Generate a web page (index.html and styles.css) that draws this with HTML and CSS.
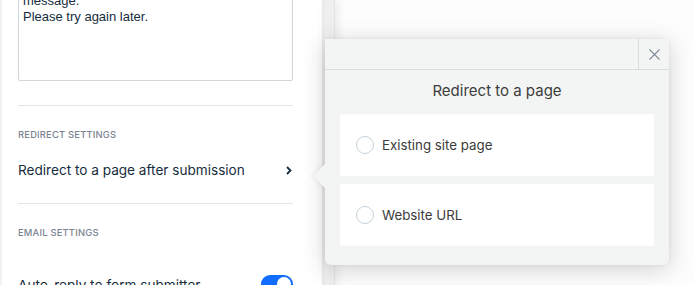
FILE: index.html
```html
<!DOCTYPE html>
<html>
<head>
<meta charset="utf-8">
<link rel="stylesheet" href="styles.css">
</head>
<body>
<div class="app">
  <aside class="panel">
    <div class="textbox">
      <div class="line">message.</div>
      <div class="line">Please try again later.</div>
    </div>
    <hr class="divider">
    <div class="section-label">REDIRECT SETTINGS</div>
    <div class="row">
      <span class="row-text">Redirect to a page after submission</span>
      <svg class="chev" width="6" height="9" viewBox="0 0 6 9"><path d="M1 1l3.5 3.5L1 8" fill="none" stroke="#162d3d" stroke-width="1.8"/></svg>
    </div>
    <hr class="divider">
    <div class="section-label">EMAIL SETTINGS</div>
    <div class="row row-toggle">
      <span class="row-text">Auto-reply to form submitter</span>
      <span class="toggle"><span class="knob"></span></span>
    </div>
  </aside>
  <div class="stripe"></div>
  <main class="canvas"></main>

  <div class="popup">
    <span class="arrow"></span>
    <div class="popup-head">
      <button class="close" aria-label="Close">
        <svg width="11" height="11" viewBox="0 0 11 11"><path d="M0.5 0.5l10 10M10.5 0.5l-10 10" stroke="#7f8c96" stroke-width="1.1" fill="none"/></svg>
      </button>
    </div>
    <div class="popup-title">Redirect to a page</div>
    <div class="cards">
      <label class="card"><span class="radio"></span><span>Existing site page</span></label>
      <label class="card"><span class="radio"></span><span>Website URL</span></label>
    </div>
  </div>
</div>
</body>
</html>
```
FILE: styles.css
```css
* { box-sizing: border-box; }
html, body { margin: 0; padding: 0; }
body {
  width: 694px;
  height: 285px;
  overflow: hidden;
  background: #ffffff;
  font-family: "Inter", "Noto Sans", sans-serif;
}
.app {
  position: relative;
  display: flex;
  height: 285px;
  overflow: hidden;
}
.panel {
  width: 322px;
  flex: none;
  background: #fff;
  border-left: 2px solid #f1f1f1;
  padding: 0 29px 0 16px;
}
.textbox {
  margin-top: -25px;
  height: 106px;
  border: 1px solid #d0d6dc;
  border-radius: 2px;
  padding: 6px 4px;
  font-family: "Liberation Sans", Arial, sans-serif;
  font-size: 13px;
  line-height: 16px;
  color: #162d3d;
}
.line:first-child { margin-top: 11px; }
.divider {
  margin: 24px 0 0;
  border: 0;
  border-top: 1px solid #e2e4e6;
}
.section-label {
  margin-top: 23px;
  font-size: 9.4px;
  letter-spacing: 0.2px;
  color: #7a8392;
  font-weight: 500;
  line-height: 12px;
}
.row {
  display: flex;
  align-items: center;
  justify-content: space-between;
  height: 50px;
  margin-top: 4px;
  padding-right: 1px;
}
.row-text {
  font-size: 13.6px;
  color: #162d3d;
}
.row + .divider { margin-top: 8px; }
.row-toggle { margin-top: 18px; height: 60px; align-items: flex-start; padding-top: 20px; padding-right: 0; }
.toggle {
  width: 32px;
  height: 18px;
  border-radius: 9px;
  background: #116dff;
  position: relative;
  margin-top: -2px;
}
.knob {
  position: absolute;
  right: 1px;
  top: 1px;
  width: 16px;
  height: 16px;
  border-radius: 50%;
  background: #fff;
  border: 1px solid #116dff;
}
.stripe {
  width: 13px;
  flex: none;
  background: #efefef;
  border-right: 1px solid #e4e4e4;
  box-shadow: 3px 0 8px rgba(0,0,0,0.08), inset 2px 0 3px rgba(0,0,0,0.03);
  position: relative;
  z-index: 1;
}
.canvas {
  flex: 1;
  background: #fdfdfd;
}
.popup {
  position: absolute;
  left: 325px;
  top: 39px;
  width: 344px;
  height: 226px;
  background: #f3f5f4;
  border-radius: 0 0 6px 6px;
  box-shadow: 0 4px 24px rgba(0,0,0,0.18), 0 0 4px rgba(0,0,0,0.06);
  z-index: 2;
}
.arrow {
  position: absolute;
  left: -12px;
  top: 125px;
  width: 0;
  height: 0;
  border-top: 12px solid transparent;
  border-bottom: 12px solid transparent;
  border-right: 12px solid #f3f5f4;
  filter: drop-shadow(-2px 0 2px rgba(0,0,0,0.06));
}
.popup-head {
  height: 31px;
  border-bottom: 1px solid #d8dde1;
  display: flex;
  justify-content: flex-end;
}
.close {
  width: 31px;
  height: 30px;
  border: 0;
  border-left: 1px solid #d8dde1;
  background: transparent;
  padding: 0;
  display: flex;
  align-items: center;
  justify-content: center;
}
.popup-title {
  text-align: center;
  font-size: 15px;
  color: #3d3d3d;
  margin-top: 11px;
  line-height: 20px;
}
.cards {
  display: flex;
  flex-direction: column;
  gap: 8px;
  padding: 13px 15px 0;
}
.card {
  height: 62px;
  background: #fff;
  border-radius: 3px;
  display: flex;
  align-items: center;
  padding-left: 16px;
  gap: 8px;
  font-size: 13.3px;
  color: #3b3b3b;
}
.radio {
  width: 18px;
  height: 18px;
  border-radius: 50%;
  border: 1px solid #c8d2d9;
  background: #fff;
  flex: none;
}
```
